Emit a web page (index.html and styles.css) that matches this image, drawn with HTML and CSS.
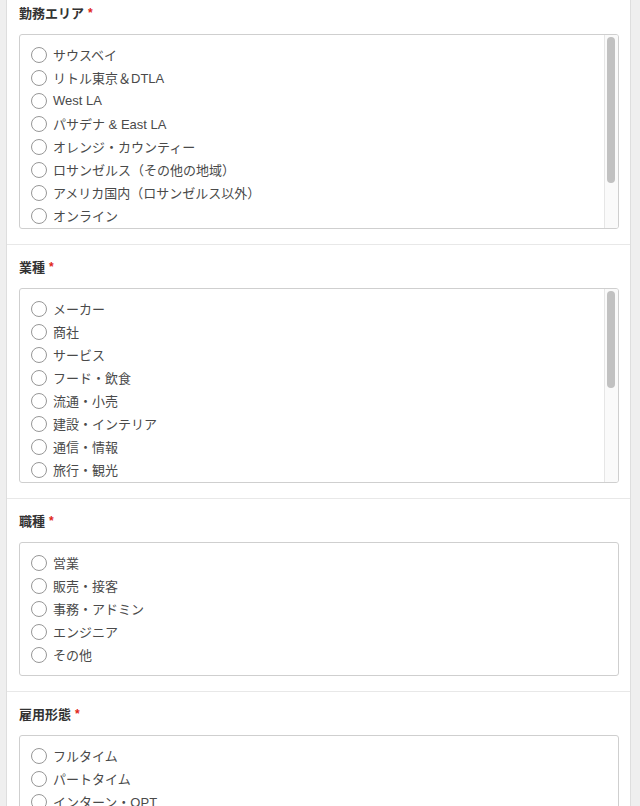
FILE: index.html
```html
<!DOCTYPE html>
<html lang="ja">
<head>
<meta charset="utf-8">
<title>求人検索</title>
<link rel="stylesheet" href="styles.css">
</head>
<body>
<div class="panel">
  <section class="section section-first">
    <div class="label">勤務エリア<span class="req">*</span></div>
    <div class="box box-scroll">
      <div class="list">
        <label class="item"><input type="radio" name="area"><span>サウスベイ</span></label>
        <label class="item"><input type="radio" name="area"><span>リトル東京＆DTLA</span></label>
        <label class="item"><input type="radio" name="area"><span>West LA</span></label>
        <label class="item"><input type="radio" name="area"><span>パサデナ &amp; East LA</span></label>
        <label class="item"><input type="radio" name="area"><span>オレンジ・カウンティー</span></label>
        <label class="item"><input type="radio" name="area"><span>ロサンゼルス（その他の地域）</span></label>
        <label class="item"><input type="radio" name="area"><span>アメリカ国内（ロサンゼルス以外）</span></label>
        <label class="item"><input type="radio" name="area"><span>オンライン</span></label>
        <label class="item"><input type="radio" name="area"><span>日本</span></label>
        <label class="item"><input type="radio" name="area"><span>その他</span></label>
      </div>
      <div class="scrollbar"><div class="thumb" style="height: 146px"></div></div>
    </div>
  </section>
  <section class="section">
    <div class="label">業種<span class="req">*</span></div>
    <div class="box box-scroll">
      <div class="list">
        <label class="item"><input type="radio" name="ind"><span>メーカー</span></label>
        <label class="item"><input type="radio" name="ind"><span>商社</span></label>
        <label class="item"><input type="radio" name="ind"><span>サービス</span></label>
        <label class="item"><input type="radio" name="ind"><span>フード・飲食</span></label>
        <label class="item"><input type="radio" name="ind"><span>流通・小売</span></label>
        <label class="item"><input type="radio" name="ind"><span>建設・インテリア</span></label>
        <label class="item"><input type="radio" name="ind"><span>通信・情報</span></label>
        <label class="item"><input type="radio" name="ind"><span>旅行・観光</span></label>
        <label class="item"><input type="radio" name="ind"><span>金融・保険</span></label>
        <label class="item"><input type="radio" name="ind"><span>不動産</span></label>
        <label class="item"><input type="radio" name="ind"><span>医療・福祉</span></label>
        <label class="item"><input type="radio" name="ind"><span>教育</span></label>
        <label class="item"><input type="radio" name="ind"><span>美容</span></label>
        <label class="item"><input type="radio" name="ind"><span>運輸・物流</span></label>
        <label class="item"><input type="radio" name="ind"><span>広告・メディア</span></label>
        <label class="item"><input type="radio" name="ind"><span>その他</span></label>
      </div>
      <div class="scrollbar"><div class="thumb" style="height: 97px"></div></div>
    </div>
  </section>
  <section class="section">
    <div class="label">職種<span class="req">*</span></div>
    <div class="box">
      <div class="list">
        <label class="item"><input type="radio" name="job"><span>営業</span></label>
        <label class="item"><input type="radio" name="job"><span>販売・接客</span></label>
        <label class="item"><input type="radio" name="job"><span>事務・アドミン</span></label>
        <label class="item"><input type="radio" name="job"><span>エンジニア</span></label>
        <label class="item"><input type="radio" name="job"><span>その他</span></label>
      </div>
    </div>
  </section>
  <section class="section">
    <div class="label">雇用形態<span class="req">*</span></div>
    <div class="box">
      <div class="list">
        <label class="item"><input type="radio" name="emp"><span>フルタイム</span></label>
        <label class="item"><input type="radio" name="emp"><span>パートタイム</span></label>
        <label class="item"><input type="radio" name="emp"><span>インターン・OPT</span></label>
        <label class="item"><input type="radio" name="emp"><span>契約社員</span></label>
        <label class="item"><input type="radio" name="emp"><span>その他</span></label>
      </div>
    </div>
  </section>
</div>
</body>
</html>
```
FILE: styles.css
```css
html, body {
  margin: 0;
  padding: 0;
}
body {
  background: #efefef;
  font-family: "Liberation Sans", "Noto Sans CJK JP", sans-serif;
  color: #4a4a4a;
  height: 806px;
  overflow: hidden;
}
.panel {
  background: #fff;
  margin: 0 9px 0 6px;
  border-left: 1px solid #dedede;
  border-right: 1px solid #dedede;
  min-height: 806px;
}
.section {
  padding: 14px 11px 15px 12px;
  border-bottom: 1px solid #e8e8e8;
}
.section-first {
  padding-top: 5px;
}
.label {
  font-size: 13px;
  font-weight: bold;
  color: #333;
  line-height: 18px;
  margin-bottom: 11px;
  display: flex;
  align-items: center;
}
.req {
  color: #e0241b;
  font-size: 12px;
  margin-left: 4px;
  position: relative;
  top: -1px;
}
.box {
  border: 1px solid #cfcfcf;
  border-radius: 3px;
  box-sizing: border-box;
  display: flex;
  overflow: hidden;
}
.box-scroll {
  height: 195px;
}
.list {
  flex: 1;
  padding: 8px 0 9px 10px;
  overflow: hidden;
}
.scrollbar {
  flex: none;
  width: 14px;
  box-sizing: border-box;
  background: #fafafa;
  border-left: 1px solid #e6e6e6;
  padding: 2px 3px 2px 2px;
}
.thumb {
  background: #c1c1c1;
  border-radius: 4px;
}
.item {
  display: flex;
  align-items: center;
  height: 23px;
  font-size: 13px;
  color: #4a4a4a;
}
.item input {
  appearance: none;
  -webkit-appearance: none;
  width: 16px;
  height: 16px;
  margin: 0 6px 0 1px;
  border: 1px solid #979797;
  border-radius: 50%;
  background: #fff;
  flex: none;
}
```
